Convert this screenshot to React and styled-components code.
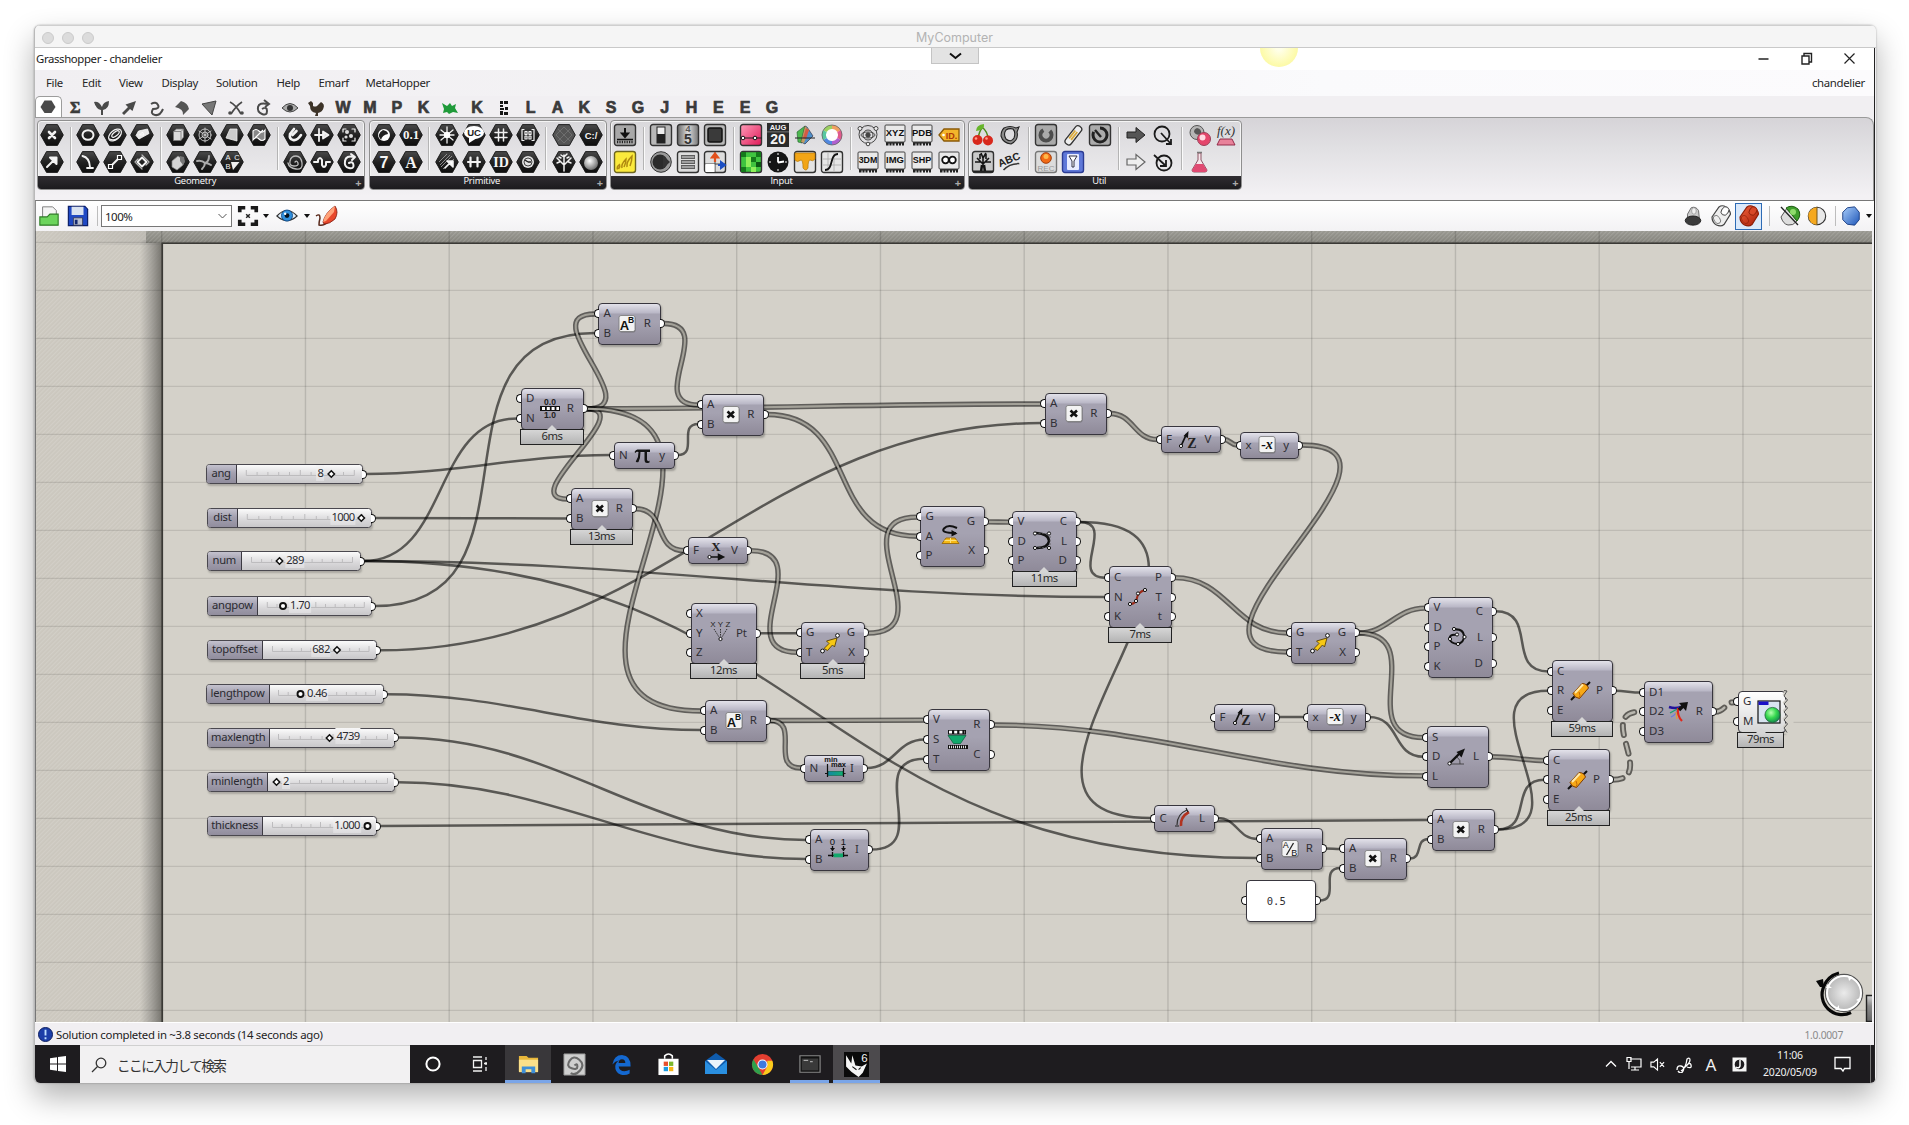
import React from "react";
import styled, { createGlobalStyle, css } from "styled-components";

const UI = '"Noto Sans", "Open Sans", "Noto Sans CJK JP", sans-serif';

const GlobalStyle = createGlobalStyle`
  *, *::before, *::after { box-sizing: border-box; }
  body { margin: 0; background: #fff; font-family: ${UI}; overflow: hidden; }
`;

/* ------------------------------------------------------------------ frame */

const Desktop = styled.main`
  width: 1909px;
  height: 1125px;
  padding: 25px 33px 42px 34px;
  background: #fff;
  overflow: hidden;
`;

const MacWindow = styled.div`
  display: flex;
  flex-direction: column;
  height: 1058px;
  border-radius: 6px;
  overflow: hidden;
  background: #f1eff2;
  border-left: 1px solid #b9b9b9;
  box-shadow: 0 0 2px rgba(0, 0, 0, 0.35), 0 14px 30px rgba(0, 0, 0, 0.3);
`;

const MacBar = styled.header`
  display: grid;
  grid-template-columns: 1fr auto 1fr;
  align-items: center;
  height: 23px;
  flex: none;
  padding: 2px 2px 0 0;
  background: #f5f5f5;
  border-top: 1px solid #cfcfcf;
  border-bottom: 1px solid #c9c9c9;
  font-family: Inter, sans-serif;
  font-size: 12.5px;
  color: #b3b3b3;
`;

const Lights = styled.div`
  display: flex;
  gap: 8px;
  padding-left: 7px;
`;

const Light = styled.i`
  width: 12px;
  height: 12px;
  border-radius: 50%;
  background: #dcdcdc;
  border: 1px solid #cbcbcb;
`;

const AppArea = styled.div`
  flex: 1;
  min-height: 0;
  display: flex;
  flex-direction: column;
  border-right: 1px solid #222;
  margin-right: 1px;
`;

const TitleBar = styled.div`
  position: relative;
  display: flex;
  align-items: center;
  justify-content: space-between;
  height: 22px;
  flex: none;
  padding: 0 17px 1px 1px;
  background: #fff;
  overflow: hidden;
  font-size: 11.4px;
  letter-spacing: -0.38px;
  color: #222;
`;

const PullTab = styled.div`
  position: absolute;
  left: 896px;
  top: 0;
  width: 48px;
  height: 16px;
  display: grid;
  place-items: center;
  background: #e3e3e3;
  border: 1px solid #c4c4c4;
  border-top: 0;
`;

const Glow = styled.div`
  position: absolute;
  left: 1225px;
  top: -19px;
  width: 38px;
  height: 38px;
  border-radius: 50%;
  background: radial-gradient(circle, #ffffe8 10%, #fdfbb0 60%, #f8f48e 100%);
`;

const WindowButtons = styled.div`
  display: flex;
  gap: 28px;
`;

const MenuBar = styled.nav`
  display: flex;
  align-items: center;
  justify-content: space-between;
  height: 26px;
  flex: none;
  padding: 0 9px 1px 11px;
  background: linear-gradient(90deg, #f1eff2 0%, #f4f3f5 45%, #fafafc 70%, #fcfbfd 100%);
  font-size: 11.4px;
  letter-spacing: -0.33px;
  color: #262626;
`;

const MenuItems = styled.div`
  display: flex;
`;

const MenuItem = styled.span`
  width: ${(p) => p.$w}px;
`;

const TabStrip = styled.div`
  display: flex;
  align-items: stretch;
  height: 21px;
  flex: none;
  background: #f1eff2;
`;

const Tab = styled.div`
  width: 26.8px;
  flex: none;
  display: grid;
  place-items: center;
  padding-top: 2px;
  font: 900 16px/1 "Liberation Sans", sans-serif;
  color: #3a3a3a;
  -webkit-text-stroke: 0.7px #3a3a3a;
  ${(p) =>
    p.$active &&
    css`
      background: #fff;
      border: 1px solid #9c9c9c;
      border-bottom: 0;
      border-radius: 5px 5px 0 0;
      padding-top: 0;
    `}
`;

/* ----------------------------------------------------------------- ribbon */

const Ribbon = styled.div`
  display: flex;
  gap: 3.5px;
  height: 83px;
  flex: none;
  padding: 2px 0 0 2px;
  border-top: 1px solid #9a9a9a;
  border-right: 1px solid #9a9a9a;
  border-top-right-radius: 8px;
  background: linear-gradient(#d6d4d8, #e2e1e4 40%, #f3f1f4 95%);
`;

const Group = styled.section`
  display: flex;
  flex-direction: column;
  flex: none;
  height: 70px;
  border-radius: 4px;
  overflow: hidden;
  border: 1px solid #8f8f8f;
  background: linear-gradient(#d9d8db, #f0eff1);
  box-shadow: inset 0 0 0 1px #f4f4f4;
`;

const GroupBody = styled.div`
  display: flex;
  flex: 1;
  padding: 0 ${(p) => p.$pr}px 0 0.4px;
`;

const Section = styled.div`
  display: grid;
  grid-template-rows: 27px 27px;
  grid-auto-flow: column;
  grid-auto-columns: 26.9px;
  align-content: center;
  justify-items: center;
  align-items: center;
  & + & {
    margin-left: 9.4px;
    position: relative;
  }
  & + &::before {
    content: "";
    position: absolute;
    left: -5px;
    top: 6px;
    bottom: 6px;
    width: 1px;
    background: #b4b4b4;
    box-shadow: 1px 0 #fafafa;
  }
`;

const GroupLabel = styled.div`
  display: grid;
  grid-template-columns: 1fr 12px;
  height: 13px;
  background: linear-gradient(#2f2d31, #1c1b1e);
  color: #fff;
  font: 9.4px/9px "Open Sans", sans-serif;
  letter-spacing: -0.2px;
  text-align: center;
`;

const Plus = styled.b`
  font-size: 11px;
  line-height: 13px;
  color: #aaa;
`;

/* --------------------------------------------------------- canvas toolbar */

const Toolbar = styled.div`
  display: flex;
  align-items: center;
  justify-content: space-between;
  height: 31px;
  flex: none;
  border-top: 1px solid #777;
  border-left: 1px solid #8a8a8a;
  background: linear-gradient(#ffffff, #f3f2f4);
`;

const Tools = styled.div`
  display: flex;
  align-items: center;
`;

const Tool = styled.div`
  width: ${(p) => p.$w}px;
  height: 27px;
  display: grid;
  place-items: center;
  ${(p) =>
    p.$on &&
    css`
      border: 1.5px solid #2d6bb5;
      background: #dbe9fa;
    `}
`;

const Rule = styled.i`
  width: 1px;
  height: 20px;
  margin: 0 ${(p) => p.$m}px;
  background: #bdbdbd;
`;

const Combo = styled.div`
  width: 131px;
  height: 22px;
  padding: 0 4px 0 3px;
  display: flex;
  align-items: center;
  justify-content: space-between;
  background: #fff;
  border: 1px solid #777;
  font-size: 11.5px;
  letter-spacing: -0.5px;
  color: #222;
`;

/* ----------------------------------------------------------------- canvas */

const OX = 36;
const OY = 231;
const CW = 1837;
const CH = 791;

const Canvas = styled.div`
  position: relative;
  width: ${CW}px;
  height: ${CH}px;
  flex: none;
  overflow: hidden;
  background: #d4d1c9;
  border-left: 1px solid #777;
`;

const Backdrop = styled.svg`
  position: absolute;
  left: 0;
  top: 0;
`;

const NodeBox = styled.div`
  position: absolute;
  left: ${(p) => p.$n.x - OX}px;
  top: ${(p) => p.$n.y - OY}px;
  width: ${(p) => p.$n.w}px;
  height: ${(p) => p.$n.h}px;
  display: flex;
  justify-content: space-between;
  padding: 2px 0;
  border: 1.5px solid #38363e;
  border-radius: 4px;
  background: ${(p) =>
    p.$n.text
      ? "#fff"
      : p.$n.light
      ? "linear-gradient(#ffffff, #d6d6d6)"
      : "linear-gradient(#e3e2ea 0, #b9b7c6 9px, #a5a2b1 10px, #a5a2b1 45%, #8f8a99 100%)"};
  box-shadow: 1px 2px 2px rgba(0, 0, 0, 0.25);
  font-size: 11.5px;
  color: #302f35;
`;

const Ports = styled.div`
  display: flex;
  flex-direction: column;
  margin: -1.5px;
  width: 20px;
  text-align: center;
`;

const Port = styled.span`
  position: relative;
  flex: 1;
  display: flex;
  align-items: center;
  justify-content: ${(p) => (p.$out ? "flex-end" : "flex-start")};
  padding: 0 10px 2px 6px;
  white-space: nowrap;
  &::before {
    content: "";
    position: absolute;
    top: 50%;
    width: 5px;
    height: 9px;
    margin-top: -4.5px;
    background: #fff;
    border: 1.7px solid #0d0d0d;
    ${(p) =>
      p.$out
        ? "right: -4px; border-left: 0; border-radius: 0 5px 5px 0;"
        : "left: -4px; border-right: 0; border-radius: 5px 0 0 5px;"}
  }
`;

const NodeIcon = styled.div`
  position: absolute;
  left: 50%;
  top: 50%;
  width: 24px;
  height: 24px;
  margin: -12px 0 0 ${(p) => -14 + (p.$dx || 0)}px;
`;

const Timing = styled.div`
  position: absolute;
  left: -1.5px;
  right: ${(p) => p.$r || -1.5}px;
  top: 100%;
  height: 16px;
  border: 1.5px solid #222;
  background: linear-gradient(#d6d6d6, #b4b4b4);
  font-size: 11.3px;
  letter-spacing: -0.5px;
  line-height: 12.5px;
  text-align: center;
  color: #2a2a2a;
  &::before {
    content: "";
    position: absolute;
    left: 50%;
    top: -5px;
    margin-left: -5px;
    border: 5px solid transparent;
    border-top: 0;
    border-bottom-color: #d6d6d6;
  }
`;

const PanelText = styled.div`
  flex: 1;
  display: grid;
  place-items: center;
  margin-left: -21px;
  margin-right: -12px;
  font: 10.5px "DejaVu Sans Mono", monospace;
`;

const SliderBox = styled.div`
  position: absolute;
  left: ${(p) => p.$s.x - OX}px;
  top: ${(p) => p.$s.y - OY}px;
  width: ${(p) => p.$s.x1 - p.$s.x}px;
  height: 20px;
  display: flex;
  border: 1.4px solid #4a484f;
  border-radius: 3.5px;
  background: linear-gradient(#fbfbfb, #d9d8da 60%, #c9c8ca);
  box-shadow: 1px 2px 2px rgba(0, 0, 0, 0.2);
  font-size: 11.2px;
  letter-spacing: -0.25px;
  color: #2a2a30;
  &::after {
    content: "";
    position: absolute;
    right: -5px;
    top: 4.5px;
    width: 5px;
    height: 9px;
    background: #fff;
    border: 1.7px solid #0d0d0d;
    border-left: 0;
    border-radius: 0 5px 5px 0;
  }
`;

const SliderName = styled.div`
  width: ${(p) => p.$w}px;
  border-right: 1.4px solid #3c3a42;
  border-radius: 2px 0 0 2px;
  background: linear-gradient(#c4c2ce, #a3a0af 45%, #918d9d);
  text-align: center;
  line-height: 15.5px;
`;

const SliderTrack = styled.div`
  position: relative;
  flex: 1;
`;

const SliderValue = styled.span`
  position: absolute;
  left: ${(p) => p.$x}px;
  top: -0.5px;
  transform: translateX(-50%);
  line-height: 16px;
  padding: 0 1px;
  background: linear-gradient(#f6f6f6, #dedddf);
  font-size: 11.2px;
  letter-spacing: -0.6px;
`;

const TrackArt = styled.svg`
  position: absolute;
  left: 0;
  top: 0;
  overflow: visible;
`;

/* ---------------------------------------------------------------- bottoms */

const StatusBar = styled.div`
  display: flex;
  align-items: center;
  height: 23px;
  flex: none;
  padding: 1px 31px 0 3px;
  gap: 3px;
  border-top: 1px solid #fff;
  background: #f1eff2;
  font-size: 11.4px;
  letter-spacing: -0.3px;
  color: #222;
`;

const Version = styled.span`
  margin-left: auto;
  font-size: 10.3px;
  color: #8a8a8a;
`;

const TaskBar = styled.footer`
  display: flex;
  align-items: stretch;
  height: 38px;
  flex: none;
  background: #1e1c1f;
`;

const TaskItem = styled.div`
  width: ${(p) => p.$w || 47}px;
  flex: none;
  display: grid;
  place-items: center;
  background: ${(p) => (p.$bg ? p.$bg : "transparent")};
  border-bottom: ${(p) => (p.$line ? "3px solid #7aa5e8" : "0")};
  padding-top: ${(p) => (p.$line ? "3px" : "0")};
  padding-right: ${(p) => p.$pr || 0}px;
  margin: 0 ${(p) => p.$m || 0}px;
`;

const Search = styled.div`
  width: 330px;
  flex: none;
  display: flex;
  align-items: center;
  gap: 10px;
  padding-left: 11px;
  background: #f2f1f2;
  border-top: 1px solid #d0d0d0;
  font: 13.6px "Noto Sans CJK JP", sans-serif;
  letter-spacing: -1.5px;
  color: #333;
`;

const Tray = styled.div`
  margin-left: auto;
  display: flex;
  align-items: center;
  color: #f0f0f0;
`;

const TraySlot = styled.div`
  width: ${(p) => p.$w}px;
  padding-right: ${(p) => p.$pr || 0}px;
  display: grid;
  place-items: center;
  font-size: 17px;
`;

const Clock = styled.div`
  width: 62px;
  text-align: center;
  font-size: 10.5px;
  line-height: 17.5px;
  letter-spacing: -0.2px;
`;

const ShowDesktop = styled.i`
  width: 4px;
  height: 38px;
  border-left: 1px solid #777;
`;

/* ------------------------------------------------------------ hexagon set */

const W = { stroke: "#f2f2f2", strokeWidth: 2, fill: "none", strokeLinecap: "round", strokeLinejoin: "round" };
const T = ({ x = 12, y = 16, s = 11, children, f = "#f5f5f5", serif, w = 700 }) => (
  <text x={x} y={y} fontSize={s} fontWeight={w} fill={f} textAnchor="middle" fontFamily={serif ? "Liberation Serif" : "Liberation Sans"}>
    {children}
  </text>
);

const hexGlyphs = {
  point: <path d="M9 9l6 6M15 9l-6 6" {...W} strokeWidth="2.6" />,
  vector: <path d="M7 17l7-7M10 7.500h6.500v6.500z" {...W} fill="#fff" />,
  circle: <ellipse cx="12" cy="12" rx="5.500" ry="4.800" {...W} />,
  arcs: <g {...W} strokeWidth="1.2"><ellipse cx="12" cy="12" rx="7.500" ry="4.500" transform="rotate(-40 12 12)" /><ellipse cx="12.500" cy="11" rx="4.500" ry="2" transform="rotate(-40 12.500 11)" /><path d="M6.500 16q6 3 11-4" /></g>,
  plane: <path d="M6 12.500L8.500 8 17.500 6 19 10.500 9 16zM9.500 12l3-3 1.500 3z" fill="#e8e8e8" stroke="#fff" strokeWidth=".8" />,
  arc: <path d="M6.500 6q7 1.500 7.500 11M11 18h6" {...W} strokeWidth="1.800" />,
  line: <g><path d="M8 16l8-8" {...W} /><path d="M5.500 14.500h4v4h-4zM14.500 5.500h4v4h-4z" fill="#222" stroke="#fff" strokeWidth="1.200" /></g>,
  rect: <g {...W} strokeWidth="1.200"><path d="M12 7.500l4.500 4.500-4.500 4.500L7.500 12z" strokeWidth="1.800" /><path d="M5 12l7 7M12 5l7 7M5 12l3-3M16 15l3-3" opacity=".7" /></g>,
  box: <path d="M7.500 8.500l3-2.500h7v8l-2.500 3.500H7.500zM7.500 8.500H15v8.500M15 8.500L17.500 6" fill="#ddd" stroke="#777" strokeWidth=".8" />,
  mesh: <g {...W} strokeWidth=".9" stroke="#ccc"><circle cx="12" cy="12" r="6" /><circle cx="12" cy="12" r="3" /><path d="M12 5v14M6 8l12 8M6 16l12-8" /></g>,
  patch: <path d="M10 6h7v12l-11-3z" fill="#ccc" stroke="#eee" strokeWidth=".8" />,
  surface: <path d="M6 8q3-3 6 0t6-1v9q-3 3-6 0t-6 1zM8 15l8-8" fill="#888" stroke="#fff" strokeWidth="1.100" />,
  brep: <g><path d="M6 11l6-5 6 4-1 5-6 5-5-3z" fill="#d5d5d5" stroke="#888" strokeWidth=".7" /><path d="M14 6l4 1 1 5-2 3-3-4z" fill="#777" /></g>,
  fork: <path d="M4 11q5-1 8 2M12 13q0 3-3 6M12 13q4-1 4-7M12 13q3 0 6 2" {...W} stroke="#aaa" />,
  abc: <g><T x={8} y={10} s={7.500} w={400}>A</T><T x={17} y={10} s={7.500} w={400}>C</T><T x={8} y={19} s={7.500} w={400}>B</T><path d="M11 12h8.500L13 20z" fill="#eee" /></g>,
  clip: <path d="M11 6l-4 5q-1 5 3 6 4 1 8-5M9.500 12l4-4" {...W} strokeWidth="2.600" />,
  flow: <path d="M5 12h9M9 6v12M13 8.500v7l5.500-3.500z" {...W} fill="#ddd" strokeWidth="1.800" />,
  frame: <g><path d="M6 9V6h3M15 6h3v3M6 15v3h3M15 18h3v-3" {...W} strokeWidth="1.200" /><circle cx="10" cy="9" r="2" fill="#ddd" /><circle cx="14" cy="13" r="2" fill="#ddd" /><circle cx="9" cy="14" r="1.600" fill="#ddd" /></g>,
  spiral: <path d="M12 12q2-2 3 1t-4 3-4-5 6-5 6 7-6 6-8-6" {...W} strokeWidth="1.300" stroke="#bbb" />,
  wave: <path d="M4 12h4v-2q2-4 4 0v5q2 4 4 0v-3h4" {...W} />,
  curl: <path d="M17 7q-8-2-9 4t4 7 4.500-3-4.500-2M14 4l4 3-3 3" {...W} />,
  yin: <g><circle cx="12" cy="12" r="6" fill="#fff" /><path d="M9 17q-5-6 2-10 5 1 5 4-6 1-7 6z" fill="#222" /></g>,
  num01: <T s={13} serif>0.1</T>,
  seven: <T s={16} y={18}>7</T>,
  letterA: <T s={16} y={17.5} serif>A</T>,
  burst: <g><path d="M12 4v16M6 7l12 10M18 7L6 17M5 12h14" {...W} strokeWidth="1.300" /><circle cx="12" cy="12" r="3.200" fill="#fff" /></g>,
  uc: <g><ellipse cx="12" cy="9.500" rx="10" ry="6.500" fill="#fff" /><path d="M7 13v7l8-5z" fill="#fff" /><T y={13} s={9.500} f="#222">UC</T></g>,
  grid: <path d="M9.500 6v12M14.500 6v12M6 9.500h12M6 14.500h12" {...W} strokeWidth="1.500" />,
  matrix: <g {...W} strokeWidth="1.200"><path d="M8 6.500H6v11h2M16 6.500h2v11h-2M9 8.500h2v3H9zM13 8.500h2v3h-2zM9 13h2v3H9zM13 13h2v3h-2z" /></g>,
  shade: <g><path d="M4 12l8-8M5 15L15 5M6 17L17 6M8 19L19 9" stroke="#999" strokeWidth=".9" /><path d="M10 18l5-5M12 11h6v6z" {...W} strokeWidth="1.600" fill="#fff" /></g>,
  domain: <path d="M6 12h12M8.500 7.500v9M15.500 7.500v9" {...W} strokeWidth="2.200" />,
  id: <T s={14} y={16.800} serif>ID</T>,
  clock: <g><circle cx="12" cy="12" r="6" fill="#e2e2e2" /><circle cx="12" cy="12" r="4" fill="none" stroke="#444" /><path d="M12 12l-3-2M12 12h3" stroke="#222" strokeWidth="1.400" /></g>,
  hatch: <path d="M6 6l12 12M12 4l8 8M4 12l8 8M18 6L6 18M12 4l-8 8M20 12l-8 8" stroke="#7a7a7a" strokeWidth=".7" />,
  cmd: <T s={9.500} y={15.500}>C:/</T>,
  tree: <path d="M12 21v-6L5 8M12 15l7-7M12 15V5M8.500 11.500L5 13M15.500 11.500L19 13M9 5l3 2 3-3M7 7l2 1M17 7l-2 1" {...W} strokeWidth="1.500" />,
  ball: <circle cx="12" cy="13" r="7" fill="url(#gBall)" />,
};

const Hex = ({ g }) => (
  <svg width="24" height="24" viewBox="0 0 24 24">
    <path d="M6.500 1.600h11L23.300 12l-5.800 10.400h-11L.7 12z" fill={g === "hatch" ? "#555" : "url(#gHex)"} stroke="#141414" strokeWidth=".9" />
    {hexGlyphs[g]}
  </svg>
);

/* ------------------------------------------------------- square icon set */

const Tile = ({ fill = "#b8b8b8", children, stroke = "#333" }) => (
  <g>
    <rect x="1.500" y="1.500" width="21" height="21" rx="2.500" fill={fill} stroke={stroke} strokeWidth="1.400" />
    {children}
  </g>
);
const Chip = ({ t, s = 9.5 }) => (
  <g>
    <path d="M3 19h18v3.500h-2v-2h-1v2h-2v-2h-1v2h-2v-2h-1.500v2H9.500v-2h-1v2h-2v-2h-1v2H3z" fill="#222" />
    <rect x="2" y="2" width="20" height="17" rx="1" fill="#e9e9e9" stroke="#444" />
    <T s={s} y={13} f="#111">{t}</T>
  </g>
);

const squareGlyphs = {
  import: <Tile fill="#a8a8a8"><path d="M12 5v6M9 10.500h6L12 14z" stroke="#111" strokeWidth="2" fill="#111" /><path d="M4 16.500h16" stroke="#111" strokeWidth="1.500" /><path d="M4 19h16" stroke="#222" strokeWidth="2.400" strokeDasharray="1.200 1.200" /></Tile>,
  scribble: <Tile fill="#fbea3c" stroke="#6d6620"><path d="M4.500 19.500q-1-3 2-5 1 2-1 4.500M9 18q-1-4 4-9 0 4-2 8M14 17q-1-5 5-11 0 5-2 10" fill="none" stroke="#b08a10" strokeWidth="1.500" /></Tile>,
  toggle: <Tile><rect x="8" y="4" width="8" height="16" fill="#eee" stroke="#222" /><rect x="8" y="11" width="8" height="9" fill="#222" /></Tile>,
  scroller: <Tile fill="url(#gKnob)"><T y={9} s={9} f="#555">4</T><T y={21} s={14} f="#333">5</T></Tile>,
  button: <Tile><rect x="5" y="5" width="14" height="14" rx="2" fill="#3a3a3a" stroke="#111" strokeWidth="1.500" /></Tile>,
  knob: <g><circle cx="12" cy="12" r="10.300" fill="#999" stroke="#333" /><circle cx="11" cy="12" r="7.500" fill="#2b2b2b" /><path d="M14 5.500l7 6.500-7 6.500z" fill="#333" /></g>,
  list: <Tile fill="#ddd"><path d="M5 7h14M5 12h14M5 17h14" stroke="#333" strokeWidth="3.400" /><path d="M5.500 7h13M5.500 12h13M5.500 17h13" stroke="#c4c4c4" strokeWidth="1.600" /></Tile>,
  pad: <Tile fill="#ddd"><path d="M12 2v20M2 14h20" stroke="#444" /><path d="M2.500 14h9v8h-9z" fill="#fff" /><path d="M12 12V7M9 7.500l3-4 3 4z" stroke="#e2501c" strokeWidth="2.200" fill="#e2501c" /><path d="M15 15h4M18 12l4 3-4 3z" stroke="#1c4fc4" strokeWidth="2" fill="#1c4fc4" /></Tile>,
  gradient: <Tile fill="url(#gPink)"><path d="M1 15h22" stroke="#222" strokeWidth="1" /><circle cx="4" cy="15" r="1.800" fill="#fff" stroke="#111" /><circle cx="16" cy="15" r="1.800" fill="#fff" stroke="#111" /></Tile>,
  calendar: <g><rect x="1" y="0" width="22" height="24" fill="#2b2b2b" /><T y={7} s={7.500}>AUG</T><rect x="1" y="8.500" width="22" height=".8" fill="#888" /><T y={20.500} s={14}>20</T></g>,
  swatch: <g><path d="M4 9l8-6 3 4-6 13-4-1z" fill="#4db84f" stroke="#1d5a28" strokeWidth=".6" /><path d="M12 3l2 1 6 9-8 8-4-2z" fill="#4f8fc9" stroke="#223" strokeWidth=".6" /><path d="M12 3l4 4-5 13-3-1z" fill="#e7a03f" opacity=".75" /><path d="M13 5l3 2-3 9-3-1z" fill="#d84a3f" opacity=".8" /><path d="M2 15h20" stroke="#222" strokeWidth="1" /></g>,
  wheel: <g><circle cx="12" cy="12" r="7.700" fill="#fff" /><g fill="none" strokeWidth="4"><path d="M12 4a8 8 0 0 1 7 4" stroke="#f0a060" /><path d="M19 8a8 8 0 0 1 0 8" stroke="#e05a8c" /><path d="M19 16a8 8 0 0 1-7 4" stroke="#b060d0" /><path d="M12 20a8 8 0 0 1-7-4" stroke="#5088e0" /><path d="M5 16a8 8 0 0 1 0-8" stroke="#58c8a0" /><path d="M5 8a8 8 0 0 1 7-4" stroke="#9bd060" /></g><circle cx="12" cy="12" r="5" fill="url(#gWhite)" /><circle cx="12" cy="12" r="10" fill="none" stroke="#666" strokeWidth=".8" /></g>,
  pixels: <Tile fill="#3fc43f"><path d="M2 2h5v5H2zM12 7h5v5h-5zM2 17h5v5H2zM17 2h5v5h-5z" fill="#157a1b" /><path d="M7 7h5v5H7zM12 17h5v5h-5zM7 12h5v5H7z" fill="#8ff05a" /><path d="M17 12h5v5h-5z" fill="#0d5a14" /></Tile>,
  clock: <g><circle cx="12" cy="12" r="10.500" fill="#151515" /><path d="M12 3v2M12 19v2M3 12h2M19 12h2" stroke="#fff" /><path d="M12 12.500V7M12 12.500l6-1" stroke="#fff" strokeWidth="1.800" /></g>,
  drip: <Tile fill="#e3e3e3"><path d="M2 3h20v6q-2 3-5 1-2 0-2 8-2 4-5 0 0-8-2-8-4 3-6 0z" fill="#f2a516" stroke="#b87808" strokeWidth=".7" /></Tile>,
  graph: <Tile fill="#e6e6e6"><path d="M8 3v18M14 3v18M3 9h18M3 15h18" stroke="#aaa" strokeWidth=".8" /><path d="M5 20c9 0 4-16 13-16" fill="none" stroke="#111" strokeWidth="1.800" /></Tile>,
  atom: <g fill="none" stroke="#444"><circle cx="12" cy="11.500" r="9" strokeWidth="1" /><circle cx="12" cy="12" r="5" strokeWidth="1" /><ellipse cx="12" cy="12" rx="7" ry="3" strokeWidth=".9" /><circle cx="12" cy="12" r="2.200" fill="#444" /><circle cx="4" cy="5.500" r="2" fill="#eee" /><circle cx="20" cy="5.500" r="2" fill="#eee" /><circle cx="12" cy="21" r="1.800" fill="#eee" /></g>,
  xyz: <Chip t="XYZ" />, pdb: <Chip t="PDB" />, dm: <Chip t="3DM" s={8.800} />, img: <Chip t="IMG" />, shp: <Chip t="SHP" s={9} />,
  eyes: <g><Chip t="" /><g fill="#fff" stroke="#111" strokeWidth="1.800"><circle cx="8.500" cy="10" r="3.300" /><circle cx="15.500" cy="10" r="3.300" /></g></g>,
  tag: <g><path d="M2 12l5-6h15v12H7z" fill="#f4b52a" stroke="#8a5a08" strokeWidth="1.300" /><circle cx="6.500" cy="12" r="1.300" fill="#fff" /><T x={14.500} y={15.500} s={9} f="#b03a08">ID.</T></g>,
  cherry: <g><path d="M12 4q-4 4-5 12M11 4q6 5 6 12" fill="none" stroke="#4d8a1c" strokeWidth="1.500" /><path d="M5 8q0-6 8-7 1 6-8 7z" fill="#67b52b" /><circle cx="6.500" cy="17" r="5" fill="#d8281c" /><circle cx="17" cy="17.500" r="5" fill="#d8281c" /><circle cx="5" cy="15.500" r="1.300" fill="#ff9a8a" /><circle cx="15.500" cy="15.500" r="1.300" fill="#ff9a8a" /></g>,
  ring: <path d="M6 5q6-3 12 0l3-1-2 5q2 8-6 12-8-1-10-8 0-5 3-8zM8 7q-3 4 0 9 5 4 8-1 2-6-1-9-4-1-7 1z" fill="#8a8a8a" fillRule="evenodd" stroke="#222" strokeWidth="1.100" />,
  trees: <Tile fill="#c9c9c9"><path d="M10 22l1-7M14 22l-1-7" stroke="#111" strokeWidth="2.500" /><path d="M12 16V7M12 14L6 8M12 14l6-6M10 12H4M14 12h6M9 9V4M15 9V4M12 8l-2-5M12 8l3-5" stroke="#151515" strokeWidth="1.600" /><path d="M2 21.500h20" stroke="#222" strokeWidth="2" /></Tile>,
  abctxt: <g transform="rotate(-22 12 12)"><T s={10.500} y={13} f="#222">ABC</T><path d="M3 17q8-4 17 0" stroke="#333" strokeWidth="1.500" fill="none" /></g>,
  magnet: <Tile fill="#aaa"><circle cx="12" cy="12" r="5.500" fill="none" stroke="#4d4d4d" strokeWidth="4" strokeDasharray="27 8" transform="rotate(-46 12 12)" /></Tile>,
  pencil: <g transform="rotate(38 12 12)"><rect x="9" y="1" width="7" height="22" rx="3" fill="#eee" stroke="#333" strokeWidth="1.300" /><path d="M11 7v10M13.500 7v10" stroke="#d8a93c" strokeWidth="1.800" /></g>,
  gauge: <Tile fill="#ababab"><circle cx="12" cy="12" r="7" fill="none" stroke="#222" strokeWidth="3" strokeDasharray="36 8" transform="rotate(-90 12 12)" /><path d="M13 14L7 7" stroke="#222" strokeWidth="2.400" /></Tile>,
  rec: <Tile fill="#dcdcdc" stroke="#777"><circle cx="12" cy="8" r="5.300" fill="#f26a14" stroke="#a33c08" /><circle cx="12" cy="6.500" r="2.500" fill="#ffb84a" /><T y={21} s={8} f="#999" w={400}>REC</T></Tile>,
  cup: <Tile fill="#5f78d8" stroke="#2c3c94"><rect x="6" y="4" width="12" height="16" rx="1" fill="#e8ecff" /><path d="M8 6l3 5v6h2v-6l3-5z" stroke="#334" strokeWidth="1" fill="#fff" /></Tile>,
  arrowDark: <path d="M3 9h9V4.500l9 7.500-9 7.500V15H3z" fill="#555" stroke="#222" />,
  arrowLight: <path d="M3 9h9V4.500l9 7.500-9 7.500V15H3z" fill="#eee" stroke="#666" strokeWidth="1.200" />,
  zoomA: <g fill="none" stroke="#1b1b1b" strokeWidth="1.800"><circle cx="11" cy="11" r="7.500" /><path d="M10 10l10 11M20 16v5h-5" /></g>,
  zoomB: <g fill="none" stroke="#1b1b1b" strokeWidth="1.800"><circle cx="13" cy="13" r="7.500" /><path d="M3 5l12 11M15 10v6H9" /></g>,
  cells: <g><circle cx="9" cy="9.500" r="7" fill="#b5b5b5" stroke="#555" /><path d="M9 5q5 1 4 6-5 2-7-2 0-3 3-4z" fill="#555" /><circle cx="16" cy="16" r="6.500" fill="#e5466c" stroke="#9a4058" /><circle cx="14.500" cy="14.500" r="3" fill="#ffd9e2" /></g>,
  fx: <g><text x="12" y="11.500" fontSize="13" fontStyle="italic" textAnchor="middle" fontFamily="Liberation Serif" fill="#333">f(x)</text><path d="M6 16h12l3 6H3z" fill="#e8829a" stroke="#8a2040" strokeWidth=".9" /></g>,
  flask: <g><path d="M10 3v7l-6 10q0 2 2 2h11q2 0 2-2l-6-10V3z" fill="#f6e5ea" stroke="#8c5564" /><path d="M8 14h7l4 6q0 2-2 2H6q-2 0-2-2z" fill="#e04a72" /><path d="M9 2.500h5" stroke="#777" strokeWidth="1.500" /></g>,
};

const Square = ({ g }) => (
  <svg width="24" height="24" viewBox="0 0 24 24">{squareGlyphs[g]}</svg>
);

const RIBBON = [
  { label: "Geometry", kind: "hex", pr: 2, sections: [["point", "vector"], ["circle", "arc", "arcs", "line", "plane", "rect"], ["box", "brep", "mesh", "fork", "patch", "abc", "surface", null], ["clip", "spiral", "flow", "wave", "frame", "curl"]] },
  { label: "Primitive", kind: "hex", pr: 1.6, sections: [["yin", "seven", "num01", "letterA"], ["burst", "shade", "uc", "domain", "grid", "id", "matrix", "clock"], ["hatch", "tree", "cmd", "ball"]] },
  { label: "Input", kind: "sq", pr: 1.3, sections: [["import", "scribble"], ["toggle", "knob", "scroller", "list", "button", "pad"], ["gradient", "pixels", "calendar", "clock", "swatch", "drip", "wheel", "graph"], ["atom", "dm", "xyz", "img", "pdb", "shp", "tag", "eyes"]] },
  { label: "Util", kind: "sq", pr: 1.3, sections: [["cherry", "trees", "ring", "abctxt"], ["magnet", "rec", "pencil", "cup", "gauge", null], ["arrowDark", "arrowLight", "zoomA", "zoomB"], ["cells", "flask", "fx", null]] },
];

const GlyphSvg = styled.svg`
  color: ${(p) => p.$c};
  fill: currentColor;
  stroke: currentColor;
  stroke-width: 0;
`;

const TabGlyph = ({ children, color = "#4a4a4a" }) => (
  <GlyphSvg $c={color} width="18" height="18" viewBox="0 0 18 18">{children}</GlyphSvg>
);

const Sigma = styled.span`
  font-family: "Liberation Serif", serif;
`;

const TABS = [
  <TabGlyph key="hex"><path d="M5.500 2.500h7L16.500 9l-4 6h-7L1.500 9z" /></TabGlyph>,
  <Sigma key="sum">Σ</Sigma>,
  <TabGlyph key="plant"><path d="M8 16v-5Q3 10 1 3q5-1 8 5 1-5 7-6 0 8-6 9v5z" /></TabGlyph>,
  <TabGlyph key="vec"><path d="M2 14l6-6-2.500-2.500L16 2l-3.500 10L10 10l-6 6z" /></TabGlyph>,
  <TabGlyph key="curve"><path d="M4 5q5-3 7 1t-5 4q-3 5 2 6t8-6" fill="none" strokeWidth="2" /></TabGlyph>,
  <TabGlyph key="surf"><path d="M2 8l6-6q7 2 8 8l-6 6q1-6-8-8z" fill="#555" /></TabGlyph>,
  <TabGlyph key="mesh"><path d="M2 5l14-3-4 14z" fill="#777" stroke="#444" strokeWidth="1" /></TabGlyph>,
  <TabGlyph key="isect"><path d="M3 3q6 3 11 12M15 3Q9 7 4 15" fill="none" strokeWidth="1.700" /><circle cx="3" cy="14" r="1.800" /><circle cx="15" cy="14" r="1.800" /></TabGlyph>,
  <TabGlyph key="xform"><path d="M14 5q-9-2-10 3t4 7 5-3-5-2M10 1l5 4-4 3" fill="none" strokeWidth="2" /></TabGlyph>,
  <TabGlyph key="eye"><path d="M1 9q8-9 16 0-8 8-16 0z" fill="#aaa" stroke="#444" strokeWidth="1" /><circle cx="9" cy="9" r="3" fill="#333" /></TabGlyph>,
  <TabGlyph key="bird" color="#3d3328"><path d="M1 4l3-2 2 2v3q2 1 4 0l4-4q4 2 2.500 6-1 4-5.500 5v3H8l1-3q-6-1-6-7z" /></TabGlyph>,
  "W", "M", "P", "K",
  <TabGlyph key="frog" color="#1f9a3a"><path d="M1 4l5 3 3-3 2 3 4-2-1 4 3 5-5-1-4 2-2-2-4 1 1-4z" /></TabGlyph>,
  "K",
  <TabGlyph key="dots" color="#151515"><path d="M5 2h3v3H5zM9 2h4v3H9zM5 6h3v2H5zM5 9h4v2H5zM10 8h3v3h-3zM5 12h3v4H5zM9 13h4v3H9z" /></TabGlyph>,
  "L", "A", "K", "S", "G", "J", "H", "E", "E", "G",
];

/* -------------------------------------------------------------- node data */

const SLIDERS = {
  ang: { x: 205.5, x1: 362.5, nx: 235.7, y: 464, t0: 245, t1: 353, v: "8", vx: 320.5, k: 331 },
  dist: { x: 207, x1: 371.5, nx: 236.7, y: 508, t0: 246, t1: 361, v: "1000", vx: 343, k: 361 },
  num: { x: 207, x1: 360.5, nx: 240.5, y: 551, t0: 250, t1: 351, v: "289", vx: 295, k: 279 },
  angpow: { x: 207, x1: 372, nx: 256.7, y: 596, t0: 266, t1: 363, v: "1.70", vx: 300, k: 282.7, round: true },
  topoffset: { x: 207, x1: 377, nx: 261.5, y: 640.3, t0: 271, t1: 367.5, v: "682", vx: 321, k: 336.5 },
  lengthpow: { x: 205.5, x1: 383.5, nx: 268.5, y: 684.3, t0: 277, t1: 374, v: "0.46", vx: 317, k: 300, round: true },
  maxlength: { x: 207, x1: 395, nx: 268.5, y: 727.500, t0: 277, t1: 386, v: "4739", vx: 348, k: 329 },
  minlength: { x: 206.5, x1: 395, nx: 266.5, y: 772.300, t0: 276, t1: 386, v: "2", vx: 286, k: 276 },
  thickness: { x: 207, x1: 377, nx: 261.5, y: 816, t0: 271, t1: 367, v: "1.000", vx: 347, k: 367, round: true },
};

const node = (x, y, x1, y1, ins, outs, icon, extra) => ({ x, y, w: x1 - x, h: y1 - y, ins, outs, icon, ...extra });

const NODES = {
  pow1: node(598, 302.5, 660.5, 344.5, ["A", "B"], ["R"], "pow"),
  rnd: node(520.5, 387.5, 583.500, 430, ["D", "N"], ["R"], "range", { ms: "6ms" }),
  mult1: node(701.5, 393.5, 764, 435.5, ["A", "B"], ["R"], "mul"),
  pi: node(613.5, 441.5, 674.5, 468.5, ["N"], ["y"], "pi"),
  mult2: node(570.5, 487.5, 632.5, 530, ["A", "B"], ["R"], "mul", { ms: "13ms" }),
  unitX: node(687.5, 537.2, 747.5, 564, ["F"], ["V"], "unitX"),
  xyz: node(690.5, 602.5, 756.5, 664, ["X", "Y", "Z"], ["Pt"], "xyz", { ms: "12ms", dx: -2 }),
  move1: node(800.5, 621.5, 864.5, 664, ["G", "T"], ["G", "X"], "move", { ms: "5ms" }),
  rotate: node(920, 505.5, 984.5, 567, ["G", "A", "P"], ["G", "X"], "rotate"),
  interp1: node(1012, 510.5, 1076.5, 572, ["V", "D", "P"], ["C", "L", "D"], "nurbs", { ms: "11ms" }),
  divc: node(1108.5, 566, 1171.5, 628, ["C", "N", "K"], ["P", "T", "t"], "divide", { ms: "7ms" }),
  pow2: node(704.5, 699.5, 766.5, 741.5, ["A", "B"], ["R"], "pow"),
  minmax: node(804, 754.5, 863.5, 781.5, ["N"], ["I"], "bounds"),
  remap: node(927.5, 708.5, 990, 770.5, ["V", "S", "T"], ["R", "C"], "remap"),
  dom: node(809.5, 828.5, 868.5, 870.5, ["A", "B"], ["I"], "domain", { dx: 1 }),
  mult3: node(1044.5, 392.5, 1107, 434.5, ["A", "B"], ["R"], "mul"),
  unitZ: node(1160.5, 426, 1221, 453, ["F"], ["V"], "unitZ"),
  neg: node(1240, 431.5, 1298.5, 458.5, ["x"], ["y"], "neg"),
  move2: node(1290.5, 621.5, 1355.5, 663.5, ["G", "T"], ["G", "X"], "move"),
  interp2: node(1428, 596.5, 1492.5, 677.5, ["V", "D", "P", "K"], ["C", "L", "D"], "kinky", { dx: -1 }),
  unitZ2: node(1214, 703.5, 1275, 730.5, ["F"], ["V"], "unitZ"),
  neg2: node(1307, 703.5, 1366, 730.5, ["x"], ["y"], "neg"),
  sdl: node(1426.5, 726, 1488.5, 787.5, ["S", "D", "L"], ["L"], "sdl", { dx: 1 }),
  mult5: node(1431.5, 808.5, 1494.5, 850.5, ["A", "B"], ["R"], "mul"),
  mult4: node(1343.5, 837.5, 1406.5, 879.5, ["A", "B"], ["R"], "mul"),
  div: node(1260.5, 827.5, 1322.5, 869.5, ["A", "B"], ["R"], "div"),
  length: node(1154, 804.5, 1214.5, 831.5, ["C"], ["L"], "length"),
  pipe1: node(1551.5, 660, 1612.5, 721.5, ["C", "R", "E"], ["P"], "pipe", { ms: "59ms", dx: 1 }),
  pipe2: node(1547.5, 749, 1609.5, 810.5, ["C", "R", "E"], ["P"], "pipe", { ms: "25ms", dx: 1 }),
  merge: node(1643.5, 681, 1712.5, 742.5, ["D1", "D2", "D3"], ["R"], "merge", { dx: 3 }),
  preview: node(1737.5, 690.5, 1786, 733, ["G", "M"], [], "preview", { ms: "79ms", light: true, dx: 9, msr: 1 }),
  panel: node(1245.5, 879.5, 1316, 921.5, [""], [""], null, { text: "0.5" }),
};

const WIRES = [
  ["ang", 0, "pi", 0], ["dist", 0, "mult2", 1],
  ["num", 0, "rnd", 1, "s", 86], ["num", 0, "divc", 1], ["num", 0, "div", 1, "s", 450],
  ["angpow", 0, "pow1", 1, "s", 180], ["topoffset", 0, "mult3", 1, "s", 283],
  ["lengthpow", 0, "pow2", 1], ["maxlength", 0, "dom", 0], ["minlength", 0, "dom", 1], ["thickness", 0, "mult5", 0],
  ["rnd", 0, "pow1", 0, "d"], ["rnd", 0, "mult3", 0, "d"], ["rnd", 0, "mult2", 0, "d", 54], ["rnd", 0, "pow2", 0, "d"],
  ["pow1", 0, "mult1", 0, "d"], ["pi", 0, "mult1", 1], ["mult1", 0, "rotate", 1, "d"],
  ["mult2", 0, "unitX", 0, "d"], ["unitX", 0, "move1", 1, "d"], ["xyz", 0, "move1", 0],
  ["move1", 0, "rotate", 0, "d"], ["rotate", 0, "interp1", 0, "d"], ["interp1", 0, "divc", 0], ["interp1", 0, "length", 0, "s", 207],
  ["divc", 0, "move2", 0, "d"], ["neg", 0, "move2", 1, "d"], ["mult3", 0, "unitZ", 0, "d"], ["unitZ", 0, "neg", 0, "d"],
  ["move2", 0, "interp2", 0, "d"], ["move2", 0, "sdl", 0, "d"], ["unitZ2", 0, "neg2", 0], ["neg2", 0, "sdl", 1],
  ["pow2", 0, "remap", 0, "d"], ["pow2", 0, "minmax", 0, "d"], ["minmax", 0, "remap", 1], ["dom", 0, "remap", 2],
  ["remap", 0, "sdl", 2, "d"], ["sdl", 0, "pipe2", 0, "d"], ["interp2", 0, "pipe1", 0],
  ["mult5", 0, "pipe1", 1], ["mult5", 0, "pipe2", 1], ["pipe1", 0, "merge", 0],
  ["pipe2", 0, "merge", 1, "dash"], ["merge", 0, "preview", 0, "dash"],
  ["length", 0, "div", 0], ["div", 0, "mult4", 0], ["panel", 0, "mult4", 1], ["mult4", 0, "mult5", 1],
];

const portY = (n, list, i) => n.y + 2 + ((i + 0.5) * (n.h - 4)) / list.length;
const outPoint = (id, i) => {
  const s = SLIDERS[id];
  if (s) return [s.x1 + 3, s.y + 10];
  const n = NODES[id];
  return [n.x + n.w + 3, portY(n, n.outs, i)];
};
const inPoint = (id, i) => {
  const n = NODES[id];
  return [n.x - 3, portY(n, n.ins, i)];
};
const wirePath = ([from, oi, to, ii, , pull]) => {
  const [x1, y1] = outPoint(from, oi);
  const [x2, y2] = inPoint(to, ii);
  const dist = Math.hypot(x2 - x1, y2 - y1);
  const r = Math.max(0, x2 - x1) / dist;
  const d = pull || (0.67 - 0.3 * r * r) * dist;
  return `M${x1} ${y1}C${x1 + d} ${y1} ${x2 - d} ${y2} ${x2} ${y2}`;
};

const Wire = ({ wire }) => {
  const d = wirePath(wire);
  const kind = wire[4] || "s";
  if (kind === "d")
    return (
      <g fill="none">
        <path d={d} stroke="#000" strokeOpacity=".55" strokeWidth="5.400" />
        <path d={d} stroke="#a3a198" strokeWidth="2.100" />
      </g>
    );
  if (kind === "dash")
    return (
      <g fill="none" strokeLinecap="round" strokeDasharray="10 9">
        <path d={d} stroke="#5f5d58" strokeWidth="6" />
        <path d={d} stroke="#b9b7af" strokeWidth="2.400" />
      </g>
    );
  return <path d={d} fill="none" stroke="#000" strokeOpacity=".58" strokeWidth="2.500" />;
};

/* --------------------------------------------------------- node icon set */

const Key = ({ children }) => (
  <g>
    <rect x="4.500" y="4.500" width="16" height="16" rx="2" fill="#555" opacity=".5" />
    <rect x="4" y="3.500" width="16" height="16" rx="2" fill="#f3f3f3" stroke="#777" strokeWidth=".8" />
    {children}
  </g>
);
const Dot = ({ x, y, r = 1.600 }) => <circle cx={x} cy={y} r={r} fill="#fff" stroke="#111" strokeWidth="1" />;

const nodeIcons = {
  pow: <Key><T x={9.500} y={17.800} s={13} f="#111">A</T><T x={16} y={10.800} s={8.500} f="#111">B</T></Key>,
  mul: <Key><path d="M8.500 8.500l6.500 6M15 8.500l-6.500 6" stroke="#111" strokeWidth="2.600" /></Key>,
  div: <Key><path d="M8.500 18l7-12" stroke="#222" strokeWidth="1.300" /><T x={7.800} y={10.800} s={9} w={400} f="#111">A</T><T x={16.200} y={18.800} s={9} w={400} f="#111">B</T></Key>,
  neg: <Key><text x="12" y="15.500" textAnchor="middle" fontSize="14" fontStyle="italic" fontWeight="700" fontFamily="Liberation Serif" fill="#111">-x</text></Key>,
  range: <g><T y={8} s={8.500} f="#222">0.0</T><rect x="2" y="9" width="20" height="5" fill="#111" /><path d="M4 11.500h17" stroke="#fff" strokeWidth="2.800" strokeDasharray="3 1.800" /><T y={21} s={8.500} f="#222">1.0</T></g>,
  pi: <path d="M4.500 9Q6 6 8 6.500h12v2.500h-3v8q1 2 2.500.5v2q-5 2-5-3V9h-4q0 6-2 10-4 1-2-2 2-3 2-8-2-1-3 1z" fill="#141414" />,
  unitX: <g><T y={11.500} s={13} serif f="#222">X</T><path d="M6 18h12M14.500 15.500l5 2.500-5 2.500z" stroke="#111" strokeWidth="1.500" fill="#111" /><Dot x={5.500} y={18} /></g>,
  unitZ: <g><path d="M4.500 17L9.500 6" stroke="#111" strokeWidth="1.800" /><path d="M6.500 8L11.500 3l-.5 7z" fill="#111" /><Dot x={4} y={18} /><T x={15} y={20} s={14} serif f="#222">Z</T></g>,
  xyz: <g><T x={5} y={6} s={8} w={400} f="#222">X</T><T x={12.500} y={6} s={8} w={400} f="#222">Y</T><T x={20} y={6} s={8} w={400} f="#222">Z</T><path d="M6 8l5 8M12.500 8v8M19 8l-5 8" stroke="#333" strokeDasharray="1.500 1" /><Dot x={12.500} y={18} /></g>,
  move: <g><path d="M5 17.500l5-5-2.500-2.500L18 7l-2.500 9-2-2-5 5.500z" fill="#f7c815" stroke="#5a4208" strokeWidth=".9" /><Dot x={3.500} y={20} r={1.900} /><Dot x={18.500} y={4.500} r={1.900} /></g>,
  rotate: <g><path d="M19 4Q10 0 6 4.500t12 4.500" fill="none" stroke="#111" strokeWidth="2" /><path d="M13.500 6l6 3.500-6 3z" fill="#111" /><path d="M8 14h9l4 5.500H4z" fill="#f6b914" stroke="#9c6a06" strokeWidth=".9" /><path d="M6.500 16.500h12M12.500 14v5" stroke="#ffe27a" /></g>,
  nurbs: <g><path d="M6 4q13 1 13 8-1 7-12 7" fill="none" stroke="#111" strokeWidth="2.400" /><path d="M5 4.500h15v14H5" fill="none" stroke="#555" strokeWidth=".8" strokeDasharray="2 1.500" /><Dot x={5} y={4.500} /><Dot x={19} y={4.500} /><Dot x={5} y={19} /><Dot x={19} y={19} /></g>,
  divide: <g><path d="M4 19q6 0 7-6t8-8" fill="none" stroke="#9c2a18" strokeWidth="2" /><Dot x={4} y={19} /><Dot x={10} y={16} /><Dot x={12} y={8.500} /><Dot x={19} y={5} /></g>,
  bounds: <g><T x={11} y={5.500} s={7.500} f="#111">min</T><T x={18.500} y={11} s={7.500} f="#111">max</T><rect x="8" y="15.500" width="15" height="3.800" fill="url(#gTeal)" stroke="#064" strokeWidth=".6" /><path d="M7.500 8v13M23.500 12v9M5 17.500h3M23 17.500h2.500" stroke="#111" strokeWidth="1.200" /></g>,
  remap: <g><rect x="3" y="2" width="18" height="4.500" fill="#111" /><path d="M4 4.200h16" stroke="#fff" strokeWidth="2.800" strokeDasharray="3 2.200" /><path d="M3 7.500h18l-5.500 8h-7z" fill="#12a86c" stroke="#056038" strokeWidth=".7" /><rect x="3" y="17" width="20" height="4" fill="#111" /><path d="M4 19h18" stroke="#ddd" strokeWidth="2.600" strokeDasharray="1 1" /></g>,
  domain: <g><T x={6.500} y={7} s={9.500} f="#111" w={400}>0</T><T x={17.500} y={7} s={9.500} f="#111" w={400}>1</T><path d="M6.500 8v5M17.500 8v5M6.500 14v5M17.500 14v5M2 17.500h20" stroke="#111" strokeWidth="1.300" /><path d="M4 10h5l-2.500 3zM15 10h5l-2.500 3z" fill="#111" /><rect x="7.500" y="15.500" width="9.500" height="3.800" fill="#12a86c" /></g>,
  kinky: <g><path d="M9 4.500q9-1 10 6 0 8-7 8.500-7-1-7.500-6 1-4 6.500-3" fill="none" stroke="#111" strokeWidth="2" /><Dot x={9} y={4} /><Dot x={19.500} y={12} /><Dot x={13} y={19} /><Dot x={5} y={14} /><Dot x={12} y={9.500} /></g>,
  sdl: <g><path d="M5 18L16 7" stroke="#111" strokeWidth="2.400" /><path d="M11.500 7l8.500-3.500-3.500 9z" fill="#111" /><path d="M6 19h13M12 12q4 3 3 7" fill="none" stroke="#333" strokeWidth=".8" /><Dot x={4.500} y={18.500} /></g>,
  length: <g><path d="M7 19q0-11 10-15" fill="none" stroke="#333" strokeWidth="1.200" /><path d="M11 20q-1-9 8-14" fill="none" stroke="#b13320" strokeWidth="2.600" /><path d="M5 20h4M16 2l2 4" stroke="#222" strokeWidth="1.200" /></g>,
  pipe: <g><path d="M2 21l5-5M16 8l5-5" stroke="#111" strokeWidth="2" /><path d="M4 14.500L13 4.500q5 0 6.500 4.500L10.500 19.500q-5-.5-6.500-5z" fill="#f7a816" stroke="#7d3c04" strokeWidth="1" /><path d="M6 14l8-8.500" stroke="#ffe9a8" strokeWidth="2" /><path d="M10 19q2-2.500 0-6" fill="none" stroke="#c46a06" /></g>,
  merge: <g fill="none"><path d="M2 7q6 2 12 0" stroke="#20119c" strokeWidth="2.600" /><path d="M3 13l9-5" stroke="#18a070" strokeWidth="1.300" /><path d="M4 17q5-2 8-9" stroke="#6a7ae0" strokeWidth="1.200" /><path d="M11 8q-1 8 4 13" stroke="#e0281c" strokeWidth="2.200" /><path d="M9 12l1 7" stroke="#e89a30" strokeWidth="1.200" /><path d="M12 10l5-5" stroke="#111" strokeWidth="3.400" /><path d="M12 3l9-1-2 9z" fill="#111" /></g>,
  preview: <g><rect x="1" y="1" width="22" height="22" fill="#d8e4f0" stroke="#111" strokeWidth="1.200" /><rect x="1.500" y="1.500" width="10" height="3.500" fill="#1a10c8" /><circle cx="15.500" cy="15" r="7.600" fill="url(#gGreen)" stroke="#155a30" strokeWidth=".7" /></g>,
};

const Node = ({ n }) => (
  <NodeBox $n={n}>
    <Ports>{n.ins.map((t, i) => <Port key={i}>{t}</Port>)}</Ports>
    {n.text && <PanelText>{n.text}</PanelText>}
    {n.icon && (
      <NodeIcon $dx={n.dx}>
        <svg width="24" height="24" viewBox="0 0 24 24" overflow="visible">{nodeIcons[n.icon]}</svg>
      </NodeIcon>
    )}
    <Ports>{n.outs.map((t, i) => <Port key={i} $out>{t}</Port>)}</Ports>
    {n.ms && <Timing $r={n.msr}>{n.ms}</Timing>}
  </NodeBox>
);

const Slider = ({ name, s }) => {
  const base = s.nx;
  const step = (s.t1 - s.t0) / 10;
  return (
    <SliderBox $s={s}>
      <SliderName $w={s.nx - s.x}>{name}</SliderName>
      <SliderTrack>
        <TrackArt width="10" height="17">
          <path
            d={`M${s.t0 - base} 10.500H${s.t1 - base}` + Array.from({ length: 11 }, (_, i) => `M${s.t0 - base + i * step} ${i % 5 ? 7 : 5}V10.500`).join("")}
            stroke="#bdbcbe" strokeWidth="1" fill="none"
          />
        </TrackArt>
        <SliderValue $x={s.vx - base - 1}>{s.v}</SliderValue>
        <TrackArt width="10" height="17">
          {s.round ? (
            <circle cx={s.k - base - 1} cy="9" r="3" fill="#fff" stroke="#111" strokeWidth="1.900" />
          ) : (
            <path d={`M${s.k - base - 1} 5.800l3.200 3.200-3.200 3.200-3.200-3.200z`} fill="#fff" stroke="#111" strokeWidth="1.500" />
          )}
        </TrackArt>
      </SliderTrack>
    </SliderBox>
  );
};

const Scene = () => {
  const cols = Array.from({ length: 12 }, (_, i) => 161.7 + i * 143.75);
  const rows = Array.from({ length: 17 }, (_, i) => 242.3 + i * 48);
  return (
    <Backdrop width={CW} height={CH} viewBox={`${OX} ${OY} ${CW} ${CH}`}>
      <rect x={OX} y={OY} width={126} height={CH} fill="#cbc7be" />
      <rect x={OX} y={OY} width={126} height={CH} fill="url(#pHatch)" />
      <rect x={OX} y={OY} width={126} height={14} fill="url(#gTopL)" />
      <rect x="140" y="240" width="22" height={CH} fill="url(#gSide)" />
      <rect x="146" y={OY} width={CW} height={12} fill="url(#gTop)" />
      <rect x="146" y={OY} width={CW} height={12} fill="url(#pHatch)" />
      {cols.map((x) => <path key={x} d={`M${x} ${OY}V1022`} stroke="#000" strokeOpacity=".13" strokeWidth="1.400" />)}
      {rows.map((y) => <path key={y} d={`M${OX} ${y}H1873`} stroke="#000" strokeOpacity=".1" strokeWidth="1.300" />)}
      <path d="M162.300 1023V243.200H1874" fill="none" stroke="#3a3935" strokeWidth="1.600" />
      {WIRES.map((w, i) => <Wire key={i} wire={w} />)}
    </Backdrop>
  );
};

const Overlay = () => (
  <Backdrop width={CW} height={CH} viewBox={`${OX} ${OY} ${CW} ${CH}`}>
    <path d="M1785.500 690.500l-3 4 4 4-4 4 4 4-4 4 4 4-4 4 4 4-4 4 4 4-3 3 4 .5h6v-47z" fill="#d4d1c9" />
    <path d="M1784 690.500l3 .5-3 5 3.500 4-3.500 4 3.500 4-3.500 4 3.500 4-3.500 4 3.500 4-3.500 4 3 4.500" fill="none" stroke="#555" />
    <path d="M1851 1012.500A20 20 0 0 1 1824 986q4-10 15-13" fill="none" stroke="#080808" strokeWidth="3.200" />
    <path d="M1816 981l7-2 1 8-4 0z" fill="#080808" />
    <circle cx="1844" cy="993" r="18.500" fill="url(#gDial)" stroke="#555" strokeWidth="1.400" />
    <circle cx="1844" cy="993" r="17" fill="none" stroke="#fff" strokeWidth="2" />
    <path d="M1848 976l5 1-4 4zM1827 984l5 4-6 0zM1861 997l-1 5-4-2zM1839 1005l0 5-4 0z" fill="#fff" />
    <path d="M1866.500 995.500h8v26h-8z" fill="url(#gGrip)" stroke="#222" strokeWidth="1.400" />
  </Backdrop>
);

const HiddenSvg = styled.svg`
  position: absolute;
`;

const Defs = () => (
  <HiddenSvg width="0" height="0">
    <defs>
      <linearGradient id="gHex" x1="0" y1="0" x2="0" y2="1"><stop offset="0" stopColor="#4a4a4a" /><stop offset=".5" stopColor="#222" /><stop offset="1" stopColor="#0e0e0e" /></linearGradient>
      <radialGradient id="gBall" cx=".4" cy=".35" r=".7"><stop offset="0" stopColor="#fff" /><stop offset="1" stopColor="#666" /></radialGradient>
      <radialGradient id="gWhite"><stop offset=".4" stopColor="#fff" /><stop offset="1" stopColor="#fff" stopOpacity=".4" /></radialGradient>
      <linearGradient id="gTeal"><stop offset="0" stopColor="#1486a4" /><stop offset="1" stopColor="#12b070" /></linearGradient>
      <radialGradient id="gGreen" cx=".4" cy=".35" r=".7"><stop offset="0" stopColor="#b6ffb0" /><stop offset=".5" stopColor="#35d84e" /><stop offset="1" stopColor="#128050" /></radialGradient>
      <radialGradient id="gDial"><stop offset="0" stopColor="#ebebeb" /><stop offset="1" stopColor="#b5b5b5" /></radialGradient>
      <linearGradient id="gKnob"><stop offset="0" stopColor="#666" /><stop offset=".5" stopColor="#ddd" /><stop offset="1" stopColor="#777" /></linearGradient>
      <linearGradient id="gPink" x1="0" y1="0" x2="1" y2="1"><stop offset="0" stopColor="#ff9cb8" /><stop offset="1" stopColor="#e01858" /></linearGradient>
      <linearGradient id="gGrip" x1="0" y1="0" x2="0" y2="1"><stop offset="0" stopColor="#d5d5d5" /><stop offset=".4" stopColor="#8a8a8a" /><stop offset="1" stopColor="#666" /></linearGradient>
      <linearGradient id="gSide"><stop offset="0" stopColor="#777" stopOpacity="0" /><stop offset="1" stopColor="#66645e" stopOpacity=".85" /></linearGradient>
      <linearGradient id="gTop" x1="0" y1="0" x2="0" y2="1"><stop offset="0" stopColor="#989790" /><stop offset="1" stopColor="#82817a" /></linearGradient>
      <linearGradient id="gTopL"><stop offset="0" stopColor="#888" stopOpacity="0" /><stop offset="1" stopColor="#777" stopOpacity=".2" /></linearGradient>
      <linearGradient id="gRed" x1="0" y1="0" x2="1" y2="1"><stop offset="0" stopColor="#f0633c" /><stop offset="1" stopColor="#a81c08" /></linearGradient>
      <linearGradient id="gBlue" x1="0" y1="0" x2="1" y2="1"><stop offset="0" stopColor="#a8cdfa" /><stop offset="1" stopColor="#1e56b8" /></linearGradient>
      <pattern id="pHatch" width="3" height="3" patternUnits="userSpaceOnUse" patternTransform="rotate(45)"><rect width="1.200" height="3" fill="#fff" fillOpacity=".14" /></pattern>
    </defs>
  </HiddenSvg>
);

/* ------------------------------------------------------------ small icons */

const I = ({ s = 22, vb = 24, children }) => <svg width={s} height={s} viewBox={`0 0 ${vb} ${vb}`} fill="none">{children}</svg>;
const Caret = () => <svg width="6" height="4" viewBox="0 0 6 4"><path d="M0 0h6L3 4z" fill="#111" /></svg>;

const Capsule = ({ fill, stroke, inner }) => (
  <I s={24}>
    <path d="M3 13L10 3q3-2.500 7 0 4 3 4.500 7L15 20.500q-3 2.500-7.500.5Q3 18.500 3 13z" fill={fill} stroke={stroke} strokeWidth="1.200" />
    <ellipse cx="16" cy="7" rx="3.500" ry="4.500" transform="rotate(35 16 7)" fill={inner} stroke={stroke} strokeWidth=".9" />
    <ellipse cx="8" cy="15.500" rx="3" ry="4.500" transform="rotate(-35 8 15.500)" fill="none" stroke={stroke} strokeWidth=".6" />
  </I>
);

const ToolbarRow = () => (
  <Toolbar>
    <Tools>
      <Tool $w={26}><I><path d="M5 2h11l4 4v12H5z" fill="#f4f4f4" stroke="#777" /><path d="M2 13h8l3-3h9v12H2z" fill="#6cd45c" stroke="#2c7a24" strokeWidth="1.200" /></I></Tool>
      <Tool $w={31}><I><path d="M1.500 1.500h18l3 3v18h-21z" fill="#1f49c4" stroke="#0c1f6a" strokeWidth="1.300" /><path d="M5 2h13v9H5z" fill="#d9e2f0" /><path d="M7 14h10v8H7z" fill="#b9bfd0" stroke="#223" strokeWidth=".7" /><path d="M8.500 16h3v5h-3z" fill="#14286f" /></I></Tool>
      <Rule $m={3.500} />
      <Combo>100%<svg width="9" height="6" viewBox="0 0 9 6"><path d="M.5 1l4 4 4-4" fill="none" stroke="#555" /></svg></Combo>
      <Tool $w={31}><I><path d="M3 8V3h6M15 3h6v5M21 16v5h-6M9 21H3v-5" stroke="#1a1a1a" strokeWidth="4" /><path d="M10 10l4 4M14 10l-4 4" stroke="#222" strokeWidth="1.600" /></I></Tool>
      <Caret />
      <Tool $w={35}><I><path d="M1 12Q12 0 23 12 12 22 1 12z" fill="#dfeefa" stroke="#333" strokeWidth="1.300" /><circle cx="12" cy="11.500" r="6" fill="#2f8fdc" stroke="#0f4d8c" /><circle cx="12" cy="11.500" r="2.600" fill="#04121f" /><circle cx="10" cy="9.500" r="1.300" fill="#fff" /></I></Tool>
      <Caret />
      <Tool $w={32}><I s={24}><path d="M2 12q4-3 4 2-1 4-1 7 5 1 9-3" stroke="#5a2a1c" strokeWidth="1.500" /><path d="M9 18q2-9 12-16 4 6 0 13-5 5-11 5z" fill="#e8482c" stroke="#7d1c10" strokeWidth=".8" /><path d="M9 18q2-9 12-16l-1 6-8 9z" fill="#ffa37a" /></I></Tool>
    </Tools>
    <Tools>
      <Tool $w={28}><I><path d="M6 10l4-7q5-2 8 3l1 9H6z" fill="#ccc" stroke="#666" /><ellipse cx="13" cy="6.500" rx="2.500" ry="3.500" fill="#f0f0f0" stroke="#777" strokeWidth=".6" /><ellipse cx="12" cy="17" rx="8.500" ry="5" fill="#3b3b3b" stroke="#222" /></I></Tool>
      <Tool $w={28}><Capsule fill="#eee" stroke="#444" inner="#fff" /></Tool>
      <Tool $w={27} $on><Capsule fill="url(#gRed)" stroke="#8d1e08" inner="#d84828" /></Tool>
      <Rule $m={7} />
      <Tool $w={26}><I s={24}><path d="M3 13l6-9 10 13q-4 5-9 4t-7-8z" fill="#ddd" stroke="#555" /><path d="M8 4q6-4 12 1 4 6-1 12z" fill="#3f9e2c" stroke="#1c5a12" /><path d="M3 3l17 18" stroke="#222" strokeWidth="1.300" /><circle cx="15" cy="8" r="3" fill="#8fdc6c" /></I></Tool>
      <Tool $w={28}><I><circle cx="12" cy="12" r="9.500" fill="#e8e8e8" stroke="#333" strokeWidth="1.200" /><path d="M12 2.500a9.500 9.500 0 0 0 0 19z" fill="#f5a81e" /><path d="M12 2v20" stroke="#6a4a10" /></I></Tool>
      <Rule $m={3.500} />
      <Tool $w={24}><I><path d="M8 3l8-1 5 6v8l-5 6-8-1-5-5V8z" fill="url(#gBlue)" stroke="#163a80" /></I></Tool>
      <Tool $w={11}><Caret /></Tool>
    </Tools>
  </Toolbar>
);

const Taskbar = () => (
  <TaskBar>
    <TaskItem $w={45}><I s={16} vb={16}><path d="M0 2.200L7 1.200v6.300H0zM8 1l8-1v7.500H8zM0 8.500h7v6.300l-7-1zM8 8.500h8V16l-8-1.100z" fill="#fff" /></I></TaskItem>
    <Search>
      <I s={16} vb={16}><circle cx="10" cy="6" r="4.800" stroke="#333" strokeWidth="1.300" /><path d="M6.500 9.500L1 15" stroke="#333" strokeWidth="1.300" /></I>
      ここに入力して検索
    </Search>
    <TaskItem $w={48} $pr={2}><I s={16} vb={16}><circle cx="8" cy="8" r="6.600" stroke="#fff" strokeWidth="2" /></I></TaskItem>
    <TaskItem $w={47} $pr={4}><I s={16} vb={16}><path d="M1 1h9M1 15h9M1.500 4.500h8v7h-8zM14 1v3M14 6v3M14 11v4M12 7.500h3" stroke="#f2f2f2" strokeWidth="1.300" /></I></TaskItem>
    <TaskItem $w={46} $bg="#39373a" $line><I s={23}><path d="M2 3h8l2 2h10v14H2z" fill="#e8b73a" /><path d="M2 7h20v13H2z" fill="#fbe08a" /><path d="M5 21v-7h14v7h-4v-4h-6v4z" fill="#3e8fd8" /></I></TaskItem>
    <TaskItem $w={47}><I s={23}><path d="M1 1h22v22H1z" fill="#cfcfcf" stroke="#999" /><path d="M12 13q3-3 3 1t-6 2-2-8 10-1 1 11-10 3" stroke="#6a6a6a" strokeWidth="2.200" /></I></TaskItem>
    <TaskItem $w={47}><I s={23}><path d="M2.500 12Q4 2 12.500 2 22 3 21.500 14H9q1 5 6 5 3 0 5.500-1.500v4Q16 24 11 22.500 5 20 5.500 13.500 6 9.500 10 7.500 5 8.500 2.500 12zM9 10.500h7q0-4-3.500-4T9 10.500z" fill="#1468d0" /></I></TaskItem>
    <TaskItem $w={47}><I s={23}><path d="M8 6V3q4-4 8 0v3" stroke="#fff" strokeWidth="1.600" /><path d="M1.500 6h21v17h-21z" fill="#fff" /><path d="M7 9h4.500v4.500H7z" fill="#e8502c" /><path d="M12.500 9H17v4.500h-4.500z" fill="#7cb82c" /><path d="M7 14.500h4.500V19H7z" fill="#1c9ae0" /><path d="M12.500 14.500H17V19h-4.500z" fill="#f6b416" /></I></TaskItem>
    <TaskItem $w={47}><I s={24}><path d="M1 9l11-8 11 8v13H1z" fill="#0f5cae" /><path d="M3 8h18l-9 9z" fill="#e9f3fb" /><path d="M1 9l11 9 11-9v13H1z" fill="#2a8fe0" /></I></TaskItem>
    <TaskItem $w={47}><I s={23}><circle cx="12" cy="12" r="11" fill="#e33e30" /><path d="M2.500 6.500L8 16l4 7A11 11 0 0 1 2.500 6.500z" fill="#2fa14c" /><path d="M12 23l5-9V8h5.300A11 11 0 0 1 12 23z" fill="#fbcb1c" /><circle cx="12" cy="12" r="5.300" fill="#fff" /><circle cx="12" cy="12" r="4.200" fill="#3f79e0" /></I></TaskItem>
    <TaskItem $w={39} $m={4} $line><I s={22}><path d="M1 3h22v18H1z" fill="#111" stroke="#888" strokeWidth="1.300" /><path d="M3 6h18v13H3z" fill="#3a3a3a" /><path d="M5 8h5M12 9.500h3" stroke="#ccc" /></I></TaskItem>
    <TaskItem $w={47} $bg="#4c4a4d" $line><I s={25}><path d="M0 0h24v24H0z" fill="#0a0a0a" /><path d="M2 3l5 8 1-8 3 10 6 1 5-3-4 9-4 4-7-5-5-5z" fill="#f5f5f5" /><path d="M8 14l4 3M14 17l2-2" stroke="#111" /><T x={19.500} y={10} s={11} w={400}>6</T></I></TaskItem>
    <Tray>
      <TraySlot $w={24}><I s={12} vb={12}><path d="M1 8.500l5-5 5 5" stroke="#fff" strokeWidth="1.300" /></I></TraySlot>
      <TraySlot $w={22}><I s={16} vb={16}><path d="M4 3h11v8H5M9 11v3M5 14h8M1 1.500h4v4H1zM3 6v7" stroke="#fff" strokeWidth="1.200" /></I></TraySlot>
      <TraySlot $w={24}><I s={15} vb={16}><path d="M1 5.500h3L8 2v12l-4-3.500H1zM10.500 5.500l4.500 5M15 5.500l-4.500 5" stroke="#fff" strokeWidth="1.200" /></I></TraySlot>
      <TraySlot $w={30}><I s={17} vb={17}><path d="M1 14q0-5 4-4t2 5-5 0M5 15q5-3 6-12 3-2 3 1T8 12q6-7 7-3t-4 2" stroke="#fff" strokeWidth="1.300" /></I></TraySlot>
      <TraySlot $w={24}>A</TraySlot>
      <TraySlot $w={36} $pr={4}><I s={15} vb={15}><path d="M.5 .5h14v14H.5z" fill="#f5f5f5" /><circle cx="7.500" cy="7.500" r="4.800" fill="#1e1c1f" /><path d="M8 3v6q-1 3-4 1" stroke="#fff" strokeWidth="1.500" /></I></TraySlot>
      <Clock>11:06<br />2020/05/09</Clock>
      <TraySlot $w={49} $pr={7}><I s={17} vb={17}><path d="M1 1.500h15v11h-5.500L9 15l-2-2.500H1z" stroke="#fff" strokeWidth="1.300" /></I></TraySlot>
      <ShowDesktop />
    </Tray>
  </TaskBar>
);

const MENUS = [["File", 36], ["Edit", 37], ["View", 42.5], ["Display", 54.5], ["Solution", 60.5], ["Help", 42], ["Emarf", 47], ["MetaHopper", 70]];

export default function App() {
  return (
    <>
      <GlobalStyle />
      <Defs />
      <Desktop>
        <MacWindow>
          <MacBar>
            <Lights><Light /><Light /><Light /></Lights>
            MyComputer
            <span />
          </MacBar>
          <AppArea>
            <TitleBar>
              Grasshopper - chandelier
              <PullTab><svg width="13" height="8" viewBox="0 0 13 8"><path d="M1 1.500l5.500 4.500L12 1.500" fill="none" stroke="#111" strokeWidth="2" /></svg></PullTab>
              <Glow />
              <WindowButtons>
                <I s={15} vb={15}><path d="M2.500 8h10" stroke="#222" strokeWidth="1.300" /></I>
                <I s={15} vb={15}><path d="M3 5h7v8H3zM5 5V2.500h7.500V11H10" stroke="#222" strokeWidth="1.400" /></I>
                <I s={15} vb={15}><path d="M2.500 2.500l10 10M12.500 2.500l-10 10" stroke="#222" strokeWidth="1.200" /></I>
              </WindowButtons>
            </TitleBar>
            <MenuBar>
              <MenuItems>{MENUS.map(([t, w]) => <MenuItem key={t} $w={w}>{t}</MenuItem>)}</MenuItems>
              <span>chandelier</span>
            </MenuBar>
            <TabStrip>{TABS.map((t, i) => <Tab key={i} $active={i === 0}>{t}</Tab>)}</TabStrip>
            <Ribbon>
              {RIBBON.map((g) => (
                <Group key={g.label}>
                  <GroupBody $pr={g.pr}>
                    {g.sections.map((sec, i) => (
                      <Section key={i}>
                        {sec.map((name, j) => (name ? (g.kind === "hex" ? <Hex key={j} g={name} /> : <Square key={j} g={name} />) : <span key={j} />))}
                      </Section>
                    ))}
                  </GroupBody>
                  <GroupLabel>{g.label}<Plus>+</Plus></GroupLabel>
                </Group>
              ))}
            </Ribbon>
            <ToolbarRow />
            <Canvas>
              <Scene />
              {Object.entries(SLIDERS).map(([name, s]) => <Slider key={name} name={name} s={s} />)}
              {Object.entries(NODES).map(([id, n]) => <Node key={id} n={n} />)}
              <Overlay />
            </Canvas>
            <StatusBar>
              <I s={15} vb={16}><circle cx="8" cy="8" r="7.500" fill="#1c3fa8" stroke="#0a1a5c" /><path d="M8 3v6M8 11v2" stroke="#bfe0ff" strokeWidth="2" /></I>
              Solution completed in ~3.8 seconds (14 seconds ago)
              <Version>1.0.0007</Version>
            </StatusBar>
            <Taskbar />
          </AppArea>
        </MacWindow>
      </Desktop>
    </>
  );
}
